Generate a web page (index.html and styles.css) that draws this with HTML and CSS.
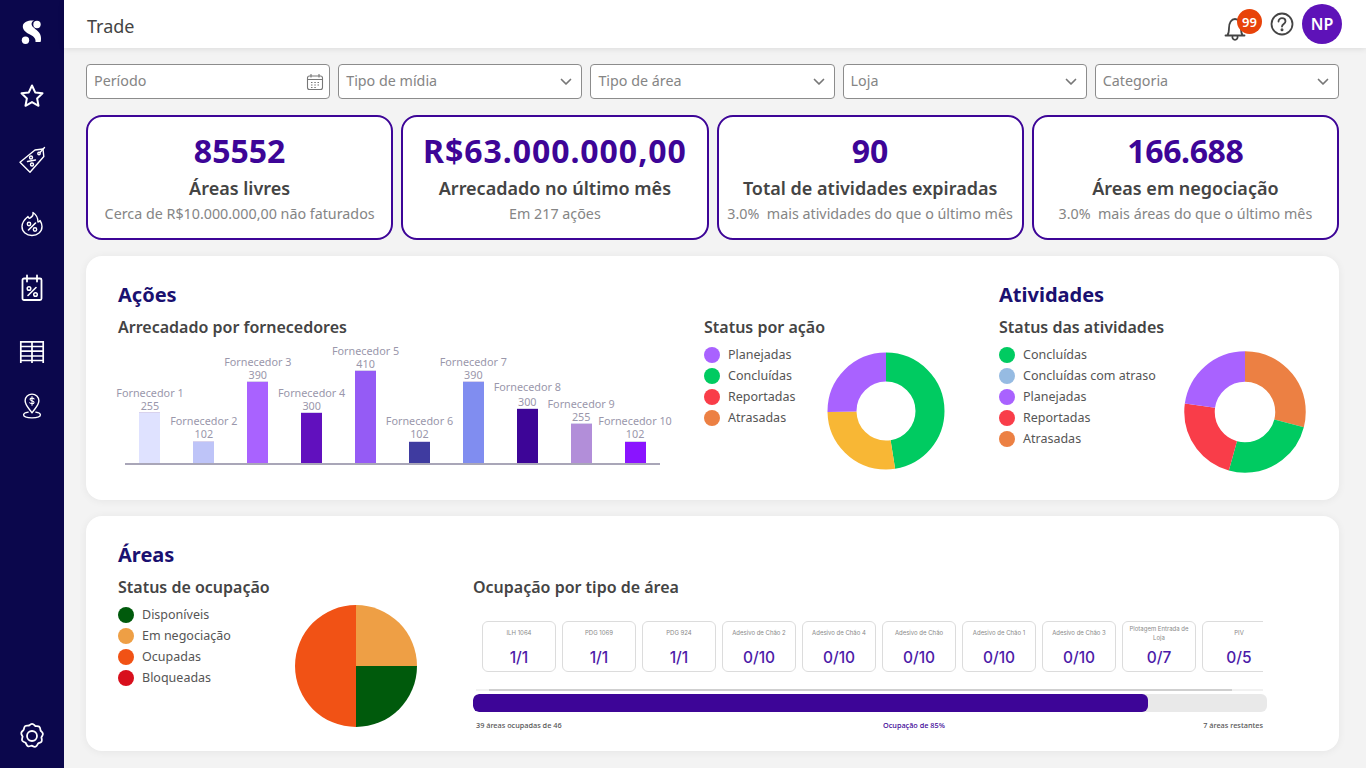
FILE: index.html
```html
<!DOCTYPE html>
<html lang="pt-BR">
<head>
<meta charset="utf-8">
<title>Trade</title>
<link rel="stylesheet" href="styles.css">
</head>
<body>
<div class="app">
  <nav class="sidebar">
    <div class="nav-item"><svg width="24" height="28" viewBox="0 0 24 28"><path fill="#fff" d="M3 7C4 4 8 2 14 2.500 11 4 11 7 13 9c3 3 8 5 8 11 0 2 0 3-.5 4h-5c.5-4-2.500-6-6.500-8C5 14 2 11 3 7z"/><circle cx="17" cy="6.500" r="3.700" fill="#fff"/><circle cx="5.500" cy="22.300" r="3.700" fill="#fff"/></svg></div>
    <div class="nav-item"><svg width="26" height="26" viewBox="0 0 26 26" fill="none" stroke="#fff" stroke-width="2" stroke-linejoin="round"><path d="M13 2.500l3.200 6.900 7.300.9-5.400 5.100 1.400 7.400-6.500-3.700-6.500 3.700 1.400-7.400-5.400-5.100 7.300-.9z"/></svg></div>
    <div class="nav-item"><svg width="28" height="28" viewBox="0 0 28 28" fill="none" stroke="#fff" stroke-width="1.400" stroke-linejoin="round" stroke-linecap="round"><path d="M2 16.300L17 4l8-1 .8 7.500L12 26.300z"/><circle cx="21" cy="7.500" r="1.200"/><path d="M22 6.500L26.500 1.500"/><path d="M9.500 15.500l8-1.500"/><circle cx="13" cy="11.500" r="1.500"/><circle cx="14" cy="18.500" r="1.500"/></svg></div>
    <div class="nav-item"><svg width="24" height="26" viewBox="0 0 24 26" fill="none" stroke="#fff" stroke-width="1.400" stroke-linecap="round" stroke-linejoin="round"><path d="M13 1.500c.5 3-1 4.500-3 5.500-1 .5-1.500 0-2-1.500C5 8 2 11 2 15.500 2 21 6.500 24.500 12 24.500S22 21 22 15.500c0-2.500-1-4.500-2-6-.5 1-1 1.500-2 1.500 0-4-2-7.500-5-9.500z"/><path d="M8.500 19l7-7" stroke-width="1.600"/><circle cx="9" cy="13" r="1.700"/><circle cx="15" cy="18.500" r="1.700"/></svg></div>
    <div class="nav-item"><svg width="22" height="28" viewBox="0 0 22 28" fill="none" stroke="#fff" stroke-width="1.800" stroke-linecap="round" stroke-linejoin="round"><rect x="1.500" y="4.500" width="19" height="21.500" rx="1.500"/><path d="M6 1.500v6M16 1.500v6"/><path d="M7 21.500l8-8" stroke-width="1.600"/><circle cx="8" cy="14.500" r="1.800" stroke-width="1.500"/><circle cx="14.500" cy="20.500" r="1.800" stroke-width="1.500"/></svg></div>
    <div class="nav-item"><svg width="26" height="24" viewBox="0 0 26 24" fill="none" stroke="#fff" stroke-width="1.700"><path d="M1 1.800h24M1 6.500h24M1 11.200h24M1 16h24M1 20.500h24M1.800 1v22M13 1v22M24.200 1v22"/></svg></div>
    <div class="nav-item nav-item-short"><svg width="20" height="26" viewBox="0 0 26 34" fill="none" stroke="#fff" stroke-width="1.800" stroke-linecap="round" stroke-linejoin="round"><path d="M13 1.500c-5 0-9 3.800-9 8.700C4 16 9 20 13 26c4-6 9-10 9-15.800 0-4.900-4-8.700-9-8.700z"/><path d="M15.800 7.800c-.8-1.300-4.800-1.800-5.400.3-.6 2.500 5.800 1.600 5.300 4.400-.4 2-4.700 1.700-5.700.3M13 4.500v11.500" stroke-width="1.400"/><path d="M8 25c-3.500.6-6 1.800-6 3.500C2 31 7 32.500 13 32.500s11-1.500 11-4c0-1.700-2.500-2.900-6-3.500"/></svg></div>
    <div class="nav-item nav-bottom"><svg width="28" height="28" viewBox="0 0 28 28" fill="none" stroke="#fff" stroke-width="1.800" stroke-linejoin="round"><path d="M14 1.800c1.600 0 2.400 1.400 3.400 2.300 1.300.3 2.800-.3 4 .7 1.100 1 .8 2.500 1.200 3.800.8 1 2.100 1.700 2.300 3.300.1 1.500-1.100 2.400-1.500 3.600.2 1.300 1 2.600.2 4-.8 1.300-2.400 1.300-3.500 2-.7 1.100-1 2.600-2.500 3.200-1.500.5-2.600-.5-3.800-1-1.300.1-2.600 1-4 .4-1.400-.7-1.500-2.200-2.200-3.300-1.100-.7-2.700-.9-3.400-2.200-.7-1.400.2-2.700.4-4-.4-1.200-1.600-2.200-1.300-3.700.3-1.500 1.700-2.100 2.400-3.100.4-1.300.3-2.800 1.400-3.700 1.200-.9 2.700-.3 4-.6C11.700 3.100 12.400 1.800 14 1.800z"/><circle cx="14" cy="14" r="5"/></svg></div>
  </nav>

  <div class="content">
    <header class="topbar">
      <span class="page-title">Trade</span>
      <div class="top-actions">
        <div class="bell">
          <svg width="24" height="26" viewBox="0 0 24 26" fill="none" stroke="#444" stroke-width="1.800" stroke-linecap="round" stroke-linejoin="round"><path d="M2.500 19.500h19M4.500 19c1.500-2 1.500-4 1.500-7C6 6.500 8.500 3 12 3s6 3.500 6 9c0 3 0 5 1.500 7"/><path d="M9.500 20.500a2.600 2.600 0 1 0 5 0"/></svg>
          <span class="badge">99</span>
        </div>
        <svg class="help" width="24" height="24" viewBox="0 0 24 24" fill="none" stroke="#444" stroke-width="1.800" stroke-linecap="round"><circle cx="12" cy="12" r="10.500"/><path d="M8.500 9.500c0-2 1.600-3.300 3.500-3.300s3.500 1.300 3.500 3.100c0 2.500-3.500 2.800-3.500 5.200"/><circle cx="12" cy="17.700" r=".6" fill="#444"/></svg>
        <div class="avatar">NP</div>
      </div>
    </header>

    <main class="main">
      <section class="filters">
        <div class="filter filter-date"><span>Período</span><svg width="18" height="18" viewBox="0 0 18 18" fill="none" stroke="#777" stroke-width="1.100"><rect x="1.500" y="3" width="15" height="13.500" rx="2"/><path d="M1.500 6.500h15M5 1v3.500M13 1v3.500"/><path d="M5 9.500h1.500M8.300 9.500h1.500M11.500 9.500H13M5 12h1.500M8.300 12h1.500M11.500 12H13M5 14.500h1.500M8.300 14.500h1.500"/></svg></div>
        <div class="filter"><span>Tipo de mídia</span><svg class="chev" width="12" height="8" viewBox="0 0 12 8" fill="none" stroke="#777" stroke-width="1.700" stroke-linecap="round" stroke-linejoin="round"><path d="M1.500 1.500L6 6l4.500-4.500"/></svg></div>
        <div class="filter"><span>Tipo de área</span><svg class="chev" width="12" height="8" viewBox="0 0 12 8" fill="none" stroke="#777" stroke-width="1.700" stroke-linecap="round" stroke-linejoin="round"><path d="M1.500 1.500L6 6l4.500-4.500"/></svg></div>
        <div class="filter"><span>Loja</span><svg class="chev" width="12" height="8" viewBox="0 0 12 8" fill="none" stroke="#777" stroke-width="1.700" stroke-linecap="round" stroke-linejoin="round"><path d="M1.500 1.500L6 6l4.500-4.500"/></svg></div>
        <div class="filter"><span>Categoria</span><svg class="chev" width="12" height="8" viewBox="0 0 12 8" fill="none" stroke="#777" stroke-width="1.700" stroke-linecap="round" stroke-linejoin="round"><path d="M1.500 1.500L6 6l4.500-4.500"/></svg></div>
      </section>

      <section class="kpis">
        <article class="kpi"><div class="kpi-value">85552</div><div class="kpi-label">Áreas livres</div><div class="kpi-note">Cerca de R$10.000.000,00 não faturados</div></article>
        <article class="kpi"><div class="kpi-value kpi-value-wide">R$63.000.000,00</div><div class="kpi-label">Arrecadado no último mês</div><div class="kpi-note">Em 217 ações</div></article>
        <article class="kpi"><div class="kpi-value">90</div><div class="kpi-label">Total de atividades expiradas</div><div class="kpi-note">3.0%&nbsp; mais atividades do que o último mês</div></article>
        <article class="kpi"><div class="kpi-value kpi-value-tight">166.688</div><div class="kpi-label">Áreas em negociação</div><div class="kpi-note">3.0%&nbsp; mais áreas do que o último mês</div></article>
      </section>

      <section class="panel panel-top">
        <div>
          <h2 class="panel-title">Ações</h2>
          <h3 class="sub-title">Arrecadado por fornecedores</h3>
          <div class="bars">
            <div class="bar-col"><span>Fornecedor 1</span><span>255</span><i class="bar c1" style="height:50px"></i></div>
            <div class="bar-col bar-col-low"><span>Fornecedor 2</span><span>102</span><i class="bar c2" style="height:21px"></i></div>
            <div class="bar-col"><span>Fornecedor 3</span><span>390</span><i class="bar c3" style="height:81px"></i></div>
            <div class="bar-col"><span>Fornecedor 4</span><span>300</span><i class="bar c4" style="height:50px"></i></div>
            <div class="bar-col"><span>Fornecedor 5</span><span>410</span><i class="bar c5" style="height:92px"></i></div>
            <div class="bar-col bar-col-low"><span>Fornecedor 6</span><span>102</span><i class="bar c6" style="height:21px"></i></div>
            <div class="bar-col"><span>Fornecedor 7</span><span>390</span><i class="bar c7" style="height:81px"></i></div>
            <div class="bar-col bar-col-gap"><span>Fornecedor 8</span><span>300</span><i class="bar c8" style="height:54px"></i></div>
            <div class="bar-col"><span>Fornecedor 9</span><span>255</span><i class="bar c9" style="height:39px"></i></div>
            <div class="bar-col bar-col-low"><span>Fornecedor 10</span><span>102</span><i class="bar c10" style="height:21px"></i></div>
          </div>
          <div class="axis"></div>
        </div>
        <div>
          <h2 class="panel-title title-spacer">&nbsp;</h2>
          <h3 class="sub-title">Status por ação</h3>
          <div class="chart-row">
            <ul class="legend legend-a">
              <li><i class="dot purple"></i>Planejadas</li>
              <li><i class="dot green"></i>Concluídas</li>
              <li><i class="dot red"></i>Reportadas</li>
              <li><i class="dot orange"></i>Atrasadas</li>
            </ul>
            <svg class="donut donut-a" width="118" height="118" viewBox="0 0 118 118" fill="none" stroke-width="29">
              <g transform="rotate(-90 59 59)">
                <circle cx="59" cy="59" r="44" pathLength="360" stroke="#00cb61" stroke-dasharray="171 189"/>
                <circle cx="59" cy="59" r="44" pathLength="360" stroke="#f8b735" stroke-dasharray="98 262" stroke-dashoffset="-171"/>
                <circle cx="59" cy="59" r="44" pathLength="360" stroke="#a962ff" stroke-dasharray="91 269" stroke-dashoffset="-269"/>
              </g>
            </svg>
          </div>
        </div>
        <div>
          <h2 class="panel-title">Atividades</h2>
          <h3 class="sub-title">Status das atividades</h3>
          <div class="chart-row">
            <ul class="legend legend-b">
              <li><i class="dot green"></i>Concluídas</li>
              <li><i class="dot blue"></i>Concluídas com atraso</li>
              <li><i class="dot purple"></i>Planejadas</li>
              <li><i class="dot red"></i>Reportadas</li>
              <li><i class="dot orange"></i>Atrasadas</li>
            </ul>
            <svg class="donut donut-b" width="122" height="122" viewBox="0 0 122 122" fill="none" stroke-width="30.500">
              <g transform="rotate(-90 61 61)">
                <circle cx="61" cy="61" r="45.500" pathLength="360" stroke="#ec8043" stroke-dasharray="104.500 255.500"/>
                <circle cx="61" cy="61" r="45.500" pathLength="360" stroke="#00cb61" stroke-dasharray="91 269" stroke-dashoffset="-104.500"/>
                <circle cx="61" cy="61" r="45.500" pathLength="360" stroke="#f93d49" stroke-dasharray="82.500 277.500" stroke-dashoffset="-195.500"/>
                <circle cx="61" cy="61" r="45.500" pathLength="360" stroke="#a962ff" stroke-dasharray="82 278" stroke-dashoffset="-278"/>
              </g>
            </svg>
          </div>
        </div>
      </section>

      <section class="panel panel-bottom">
        <div>
          <h2 class="panel-title">Áreas</h2>
          <h3 class="sub-title">Status de ocupação</h3>
          <div class="chart-row">
            <ul class="legend legend-c">
              <li><i class="dot dark-green"></i>Disponíveis</li>
              <li><i class="dot sand"></i>Em negociação</li>
              <li><i class="dot flame"></i>Ocupadas</li>
              <li><i class="dot crimson"></i>Bloqueadas</li>
            </ul>
            <svg class="pie" width="122" height="122" viewBox="0 0 122 122">
              <path fill="#ee9f45" d="M61 61V0a61 61 0 0 1 61 61z"/>
              <path fill="#005a0c" d="M61 61h61a61 61 0 0 1-61 61z"/>
              <path fill="#f15215" d="M61 61v61a61 61 0 0 1 0-122z"/>
            </svg>
          </div>
        </div>
        <div class="occupancy">
          <h2 class="panel-title title-spacer">&nbsp;</h2>
          <h3 class="sub-title">Ocupação por tipo de área</h3>
          <div class="tiles-scroll">
            <div class="tiles">
              <div class="tile"><span class="tile-name">ILH 1064</span><span class="tile-num">1/1</span></div>
              <div class="tile"><span class="tile-name">PDG 1069</span><span class="tile-num">1/1</span></div>
              <div class="tile"><span class="tile-name">PDG 924</span><span class="tile-num">1/1</span></div>
              <div class="tile"><span class="tile-name">Adesivo de Chão 2</span><span class="tile-num">0/10</span></div>
              <div class="tile"><span class="tile-name">Adesivo de Chão 4</span><span class="tile-num">0/10</span></div>
              <div class="tile"><span class="tile-name">Adesivo de Chão</span><span class="tile-num">0/10</span></div>
              <div class="tile"><span class="tile-name">Adesivo de Chão 1</span><span class="tile-num">0/10</span></div>
              <div class="tile"><span class="tile-name">Adesivo de Chão 3</span><span class="tile-num">0/10</span></div>
              <div class="tile"><span class="tile-name">Plotagem Entrada de Loja</span><span class="tile-num">0/7</span></div>
              <div class="tile"><span class="tile-name">PIV</span><span class="tile-num">0/5</span></div>
            </div>
          </div>
          <div class="scroll-track"><div class="scroll-thumb"></div></div>
          <div class="progress"><div class="progress-fill" style="width:85%"></div></div>
          <div class="progress-labels"><span>39 áreas ocupadas de 46</span><span class="progress-mid">Ocupação de 85%</span><span class="progress-end">7 áreas restantes</span></div>
        </div>
      </section>
    </main>
  </div>
</div>
</body>
</html>
```

FILE: styles.css
```css
* { box-sizing: border-box; }
html, body { margin: 0; height: 100%; }
body { font-family: "Noto Sans", "Open Sans", sans-serif; color: #444; background: #f3f3f3; overflow: hidden; }
h2, h3, ul { margin: 0; padding: 0; }
ul { list-style: none; }

.app { display: flex; height: 768px; }

.sidebar { width: 64px; flex: none; background: #0b074c; display: flex; flex-direction: column; }
.nav-item { height: 64px; display: flex; align-items: center; justify-content: center; }
.nav-item-short { height: 44px; }
.nav-bottom { margin-top: auto; }

.content { flex: 1; min-width: 0; display: flex; flex-direction: column; }

.topbar { height: 48px; flex: none; background: #fff; display: flex; align-items: center; justify-content: space-between; padding: 0 24px 0 23px; box-shadow: 0 1px 6px rgba(0,0,0,.1); position: relative; }
.page-title { font-size: 18px; color: #444; padding-top: 4px; }
.top-actions { display: flex; align-items: center; }
.bell { position: relative; width: 24px; height: 26px; margin-right: 23px; margin-top: 10px; }
.bell svg { display: block; }
.badge { position: absolute; left: 14px; top: -7px; width: 25px; height: 25px; border-radius: 50%; background: #e8430a; color: #fff; font-size: 13px; font-weight: 600; display: flex; align-items: center; justify-content: center; }
.help { margin-right: 8px; }
.avatar { width: 40px; height: 40px; border-radius: 50%; background: #5e12b8; color: #fff; font-size: 16px; font-weight: 600; display: flex; align-items: center; justify-content: center; }

.main { flex: 1; padding: 16px 27px 0 22px; display: flex; flex-direction: column; gap: 16px; }

.filters { display: grid; grid-template-columns: repeat(5, 1fr); gap: 8px; }
.filter { height: 35px; border: 1px solid #8c8c8c; border-radius: 4px; background: #fff; display: flex; align-items: center; justify-content: space-between; padding: 0 8px 2px 7px; font-size: 14.300px; color: #858585; }
.filter svg { margin-top: 2px; }
.filter-date { padding-right: 5px; }
.chev { margin-right: 1px; }

.kpis { display: grid; grid-template-columns: repeat(4, 1fr); gap: 8px; }
.kpi { height: 125px; border: 2px solid #3d0597; border-radius: 16px; background: #fff; display: flex; flex-direction: column; align-items: center; text-align: center; padding-top: 12px; }
.kpi-value { font-size: 32px; line-height: 44px; font-weight: 700; color: #3d0597; white-space: nowrap; }
.kpi-value-wide { letter-spacing: .95px; }
.kpi-value-tight { letter-spacing: -.4px; }
.kpi-label { font-size: 18px; line-height: 26px; font-weight: 600; color: #444; margin-top: 2px; white-space: nowrap; }
.kpi-note { font-size: 14.300px; line-height: 20px; color: #858585; margin-top: 3px; white-space: nowrap; }

.panel { background: #fff; border-radius: 16px; box-shadow: 0 1px 8px rgba(0,0,0,.06); padding: 24px 32px 0; display: grid; }
.panel-top { height: 244px; grid-template-columns: 586px 295px 1fr; }
.panel-bottom { height: 235px; grid-template-columns: 355px 1fr; }

.panel-title { font-size: 20px; line-height: 30px; font-weight: 700; color: #1a1070; }
.sub-title { font-size: 16px; line-height: 24px; font-weight: 600; color: #444; margin-top: 5px; }

.bars { display: grid; grid-template-columns: repeat(10, minmax(0, 1fr)); align-items: end; height: 120px; width: 539px; margin: 4px 0 0 5px; }
.axis { width: 535px; height: 2px; margin-left: 7px; background: #a9a6b8; }
.bar-col { display: flex; flex-direction: column; align-items: center; font-size: 10.800px; line-height: 13px; color: #9a97ab; white-space: nowrap; }
.bar { display: block; width: 21px; margin-top: 1px; box-shadow: 0 -1px 0 rgba(190,180,225,.6); }
.bar-col-low .bar { margin-top: 2px; }
.bar-col-gap span:first-child { margin-bottom: 2px; }
.c1 { background: #dfe2ff; } .c2 { background: #bec4f8; } .c3 { background: #a962ff; } .c4 { background: #6110be; } .c5 { background: #955bf5; }
.c6 { background: #3f3ba0; } .c7 { background: #808df0; } .c8 { background: #3d0597; } .c9 { background: #b28ed9; } .c10 { background: #8a14ff; }

.chart-row { display: flex; align-items: flex-start; }
.legend { font-size: 12.500px; color: #555; padding-top: 5px; }
.legend li { height: 21px; display: flex; align-items: center; gap: 8px; white-space: nowrap; }
.legend-a { width: 123px; }
.legend-b { width: 185px; }
.legend-c { width: 177px; }
.dot { width: 16px; height: 16px; border-radius: 50%; flex: none; }
.purple { background: #a962ff; } .green { background: #00cb61; } .red { background: #f93d49; } .orange { background: #ec8043; } .blue { background: #96bbe2; }
.dark-green { background: #005a0c; } .sand { background: #ee9f45; } .flame { background: #f15215; } .crimson { background: #d80f1c; }
.donut-a { margin-top: 13px; }
.donut-b { margin-top: 12px; }
.pie { margin-top: 6px; }

.occupancy { min-width: 0; }
.tiles-scroll { width: 787px; margin: 22px 0 0 3px; overflow: hidden; padding-left: 6px; }
.tiles { display: flex; gap: 6px; }
.tile { width: 74px; height: 51px; flex: none; background: #fff; border: 1px solid #dcdcdc; border-radius: 6px; display: flex; flex-direction: column; align-items: center; padding: 1px 3px 0; font-family: Inter, "Noto Sans", sans-serif; }
.tile-name { height: 20px; font-size: 6px; line-height: 9.500px; color: #8a8a8a; text-align: center; display: flex; align-items: center; }
.tile-num { font-size: 15.500px; line-height: 20px; font-weight: 500; color: #4c1aa8; margin-top: 5px; }
.scroll-track { width: 787px; height: 2px; margin: 17px 0 0 3px; background: #f1f1f1; padding-left: 13px; padding-right: 31px; }
.scroll-thumb { height: 2px; background: #cfcfcf; }
.progress { width: 794px; height: 18px; margin-top: 3px; background: #e9e9e9; border-radius: 6px; overflow: hidden; }
.progress-fill { height: 100%; background: #3d0597; border-radius: 6px; }
.progress-labels { width: 787px; margin: 7px 0 0 3px; display: grid; grid-template-columns: 407px 1fr auto; font-size: 7.300px; line-height: 12px; font-weight: 500; color: #555; }
.progress-mid { color: #3d0597; }
```
